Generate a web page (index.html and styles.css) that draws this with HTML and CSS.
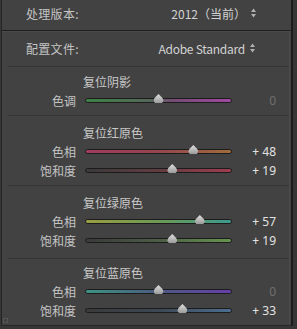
FILE: index.html
```html
<!DOCTYPE html>
<html lang="zh">
<head>
<meta charset="utf-8">
<link rel="stylesheet" href="styles.css">
</head>
<body>
<div class="panel">
  <div class="top-row">
    <span class="lbl">处理版本:</span>
    <span class="sel">2012（当前）<svg class="ud" width="5" height="10" viewBox="0 0 5 10"><polygon points="0,4 2.5,0.5 5,4"/><polygon points="0,6 2.5,9.5 5,6"/></svg></span>
  </div>
  <div class="inner">
    <div class="profile-row">
      <span class="lbl">配置文件:</span>
      <span class="sel"><span class="latin">Adobe Standard</span><svg class="ud" width="5" height="10" viewBox="0 0 5 10"><polygon points="0,4 2.5,0.5 5,4"/><polygon points="0,6 2.5,9.5 5,6"/></svg></span>
    </div>

    <div class="section s-shadow">
      <div class="title">复位阴影</div>
      <div class="row">
        <span class="name">色调</span>
        <div class="track g-tone"><span class="thumb" style="left:50%"></span></div>
        <span class="val zero">0</span>
      </div>
    </div>

    <div class="section s-red">
      <div class="title">复位红原色</div>
      <div class="row">
        <span class="name">色相</span>
        <div class="track g-red-h"><span class="thumb" style="left:74%"></span></div>
        <span class="val">+ 48</span>
      </div>
      <div class="row">
        <span class="name">饱和度</span>
        <div class="track g-red-s"><span class="thumb" style="left:59.5%"></span></div>
        <span class="val">+ 19</span>
      </div>
    </div>

    <div class="section s-green">
      <div class="title">复位绿原色</div>
      <div class="row">
        <span class="name">色相</span>
        <div class="track g-green-h"><span class="thumb" style="left:78.5%"></span></div>
        <span class="val">+ 57</span>
      </div>
      <div class="row">
        <span class="name">饱和度</span>
        <div class="track g-green-s"><span class="thumb" style="left:59.5%"></span></div>
        <span class="val">+ 19</span>
      </div>
    </div>

    <div class="section s-blue">
      <div class="title">复位蓝原色</div>
      <div class="row">
        <span class="name">色相</span>
        <div class="track g-blue-h"><span class="thumb" style="left:50%"></span></div>
        <span class="val zero">0</span>
      </div>
      <div class="row">
        <span class="name">饱和度</span>
        <div class="track g-blue-s"><span class="thumb" style="left:66.5%"></span></div>
        <span class="val">+ 33</span>
      </div>
    </div>
  </div>
  <span class="grip"></span>
</div>
</body>
</html>
```

FILE: styles.css
```css
* { box-sizing: border-box; }
html, body { margin: 0; padding: 0; }
body {
  background: #363636;
  width: 297px;
  height: 329px;
  overflow: hidden;
  font-family: "Noto Sans CJK SC", "Noto Sans", sans-serif;
  font-size: 12px;
  color: #c6c6c6;
}
.panel {
  position: relative;
  margin-left: 1px;
  width: 292px;
  height: 326px;
  background: #424242;
  border-left: 1px solid #262626;
  border-right: 2px solid #1c1c1c;
  border-bottom: 1px solid #262626;
}
.top-row {
  height: 31px;
  display: flex;
  align-items: center;
  justify-content: space-between;
  padding: 0 35px 4px 24px;
  border-bottom: 1px solid #1f1f1f;
  box-shadow: 0 1px 0 #4a4a4a;
}
.lbl { color: #c4c4c4; letter-spacing: 0.3px; }
.sel { display: flex; align-items: center; gap: 5px; color: #d2d2d2; }
.latin { letter-spacing: -0.25px; }
.ud { fill: #b0b0b0; }
.inner {
  margin: 0 1px 0 6px;
  border-right: 1px solid #4c4c4c;
}
.profile-row {
  height: 36px;
  display: flex;
  align-items: center;
  justify-content: space-between;
  padding: 0 34px 1px 18px;
  border-bottom: 1px solid #353535;
}
.section {
  border-bottom: 1px solid #353535;
}
.s-shadow { padding: 5px 0 5px; }
.s-red { padding: 7px 0 5px; }
.s-green { padding: 7px 0 8px; }
.s-blue { padding: 4px 0 4px; border-bottom: none; }
.title {
  height: 19px;
  line-height: 19px;
  padding-left: 75px;
  color: #c8c8c8;
}
.row {
  height: 19px;
  display: grid;
  grid-template-columns: 68px 156px 44px;
  align-items: center;
}
.name {
  text-align: right;
  line-height: 19px;
  color: #c4c4c4;
}
.track {
  position: relative;
  margin-left: 9px;
  width: 147px;
  height: 5px;
  border: 1px solid #1c1c1c;
  border-radius: 3px;
}
.val {
  text-align: right;
  color: #e2e2e2;
  font-family: "Noto Sans", sans-serif;
  line-height: 19px;
}
.val.zero { color: #707070; }
.thumb {
  position: absolute;
  top: -5px;
  width: 10px;
  height: 9px;
  transform: translateX(-50%);
  background: linear-gradient(#e0e0e0, #9a9a9a);
  clip-path: polygon(50% 0, 90% 45%, 100% 75%, 85% 100%, 15% 100%, 0 75%, 10% 45%);
}
.g-tone { background: linear-gradient(90deg, #3a8242, #58665a 45%, #744c74 60%, #a048a0); }
.g-red-h { background: linear-gradient(90deg, #a03c5e, #94464e 50%, #a06c3c); }
.g-red-s { background: linear-gradient(90deg, #3a3a3a, #663c42 55%, #a03c50); }
.g-green-h { background: linear-gradient(90deg, #9a9e40, #6c9a56 50%, #3c9a8e); }
.g-green-s { background: linear-gradient(90deg, #3a3a3a, #4c5e46 50%, #66944e); }
.g-blue-h { background: linear-gradient(90deg, #3c9482, #4c5a82 50%, #663eaa); }
.g-blue-s { background: linear-gradient(90deg, #3a3a3a, #3c4854 50%, #4c6e90); }
.grip {
  position: absolute;
  left: 1px;
  bottom: 2px;
  width: 5px;
  height: 5px;
  border: 1px solid #555;
}
```
